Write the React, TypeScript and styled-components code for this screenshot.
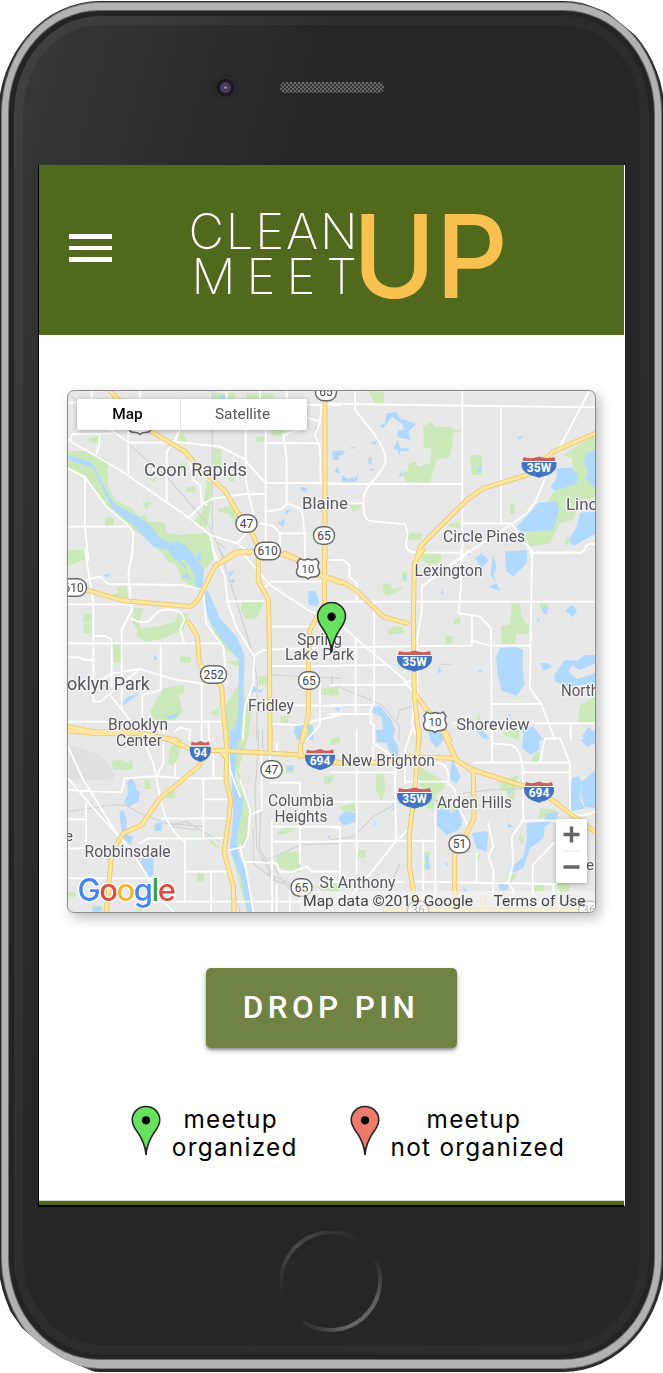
import React from "react";
import styled, { createGlobalStyle } from "styled-components";

const GlobalStyle = createGlobalStyle`
  * { box-sizing: border-box; }
  html, body { margin: 0; padding: 0; background: #fff; }
`;

const Phone = styled.div`
  width: 663px;
  height: 1373px;
  overflow: hidden;
  position: relative;
  display: flex;
  isolation: isolate;
  clip-path: polygon(0 0, 575px 0, 607px 12px, 645px 43px, 655px 62px, 663px 88px, 663px 1373px, 97px 1373px, 62px 1358px, 42px 1345px, 22px 1328px, 10px 1311px, 3px 1293px, 0 1283px);
`;

const Rim = styled.div<{ $inset: string; $radius: string; $bg: string }>`
  position: absolute;
  inset: ${(p) => p.$inset};
  border-radius: ${(p) => p.$radius};
  background: ${(p) => p.$bg};
  z-index: -1;
`;

const Face = styled.div`
  flex: 1;
  display: flex;
  flex-direction: column;
  padding: 0 38px;
`;

const Earpiece = styled.div`
  height: 165px;
  display: flex;
  align-items: center;
  padding: 9px 0 0 175px;
  gap: 42px;
`;

const Camera = styled.div`
  width: 25px;
  height: 25px;
  border-radius: 50%;
  background: radial-gradient(circle, #aaa0bd 0 0.5px, #3b3158 2px, #4f456e 4px, #171719 6.5px, #202022 9px, #2e2e2f 10px, #242424 12px);
`;

const Speaker = styled.div`
  width: 104px;
  height: 11px;
  border-radius: 5px;
  background: repeating-conic-gradient(#686868 0 25%, #333 0 50%) 0 0 / 4px 4px;
`;

const Screen = styled.main`
  width: 587px;
  height: 1042px;
  display: flex;
  flex-direction: column;
  align-items: center;
  background: #fff;
  border-left: 1px solid #000;
  border-right: 1px solid #fff;
  border-bottom: 2px solid #000;
`;

const Header = styled.header`
  width: 585px;
  height: 170px;
  flex: none;
  background: #50691c;
  display: flex;
  align-items: center;
  padding: 12px 0 0 30px;
`;

const MenuButton = styled.button`
  width: 43px;
  height: 28px;
  padding: 0;
  border: 0;
  background: none;
  display: flex;
  flex-direction: column;
  justify-content: space-between;
  margin-top: -16px;

  span { height: 4.6px; background: #fff; }
`;

const Logo = styled.svg`
  width: 330px;
  height: 110px;
  margin: 2px 0 0 73px;
  overflow: visible;
  font-family: Inter, sans-serif;
`;

const MapCard = styled.section`
  position: relative;
  width: 529px;
  height: 523px;
  flex: none;
  margin-top: 55px;
  border: 1px solid #8c8c8c;
  border-radius: 7px;
  overflow: hidden;
  background: #e8e8e8;
`;

const MapShadow = styled.div`
  height: 578px;
  filter: drop-shadow(4px 5px 6px rgba(0, 0, 0, 0.25));
`;

const MapArt = styled.svg`
  display: block;
  width: 527px;
  height: 521px;
  font-family: Roboto, sans-serif;
`;

const MapTypes = styled.div`
  position: absolute;
  left: 9px;
  top: 8px;
  width: 230px;
  height: 31px;
  display: grid;
  grid-template-columns: 103px 1fr;
  border-radius: 2px;
  background: #fff;
  box-shadow: 0 1px 5px rgba(0, 0, 0, 0.3);
`;

const MapType = styled.button<{ $active?: boolean }>`
  border: 0;
  border-left: 1px solid ${(p) => (p.$active ? "transparent" : "#e6e6e6")};
  padding: 0 3px 1px 0;
  background: none;
  font: ${(p) => (p.$active ? 500 : 400)} 15.4px Roboto, sans-serif;
  color: ${(p) => (p.$active ? "#000" : "#565656")};
`;

const Zoom = styled.div`
  position: absolute;
  right: 8px;
  bottom: 29px;
  width: 31px;
  height: 64px;
  background: #fff;
  border-radius: 2px;
  box-shadow: 0 1px 5px rgba(0, 0, 0, 0.3);
  svg { display: block; }
`;

const DropButton = styled.button`
  width: 251px;
  height: 80px;
  margin-top: 55px;
  flex: none;
  border: 0;
  border-radius: 5px;
  background: #6f8344;
  color: #fff;
  font: 500 31.5px Roboto, sans-serif;
  letter-spacing: 4.4px;
  padding: 0 1px 1px 0;
  box-shadow: 0 2px 3px rgba(0, 0, 0, 0.35), 0 3px 7px rgba(0, 0, 0, 0.15);
`;

const Legend = styled.div`
  display: flex;
  gap: 52px;
  margin: 57px 0 0 33px;
  height: 97px;
`;

const LegendItem = styled.div`
  display: flex;
  gap: 11px;
  font: 400 24.3px/28px Inter, sans-serif;
  letter-spacing: 1.28px;
  color: #000;
  text-align: center;
  white-space: pre;
  svg { flex: none; }
  p { margin: 0; }
`;

const FooterBar = styled.footer`
  width: 585px;
  height: 5px;
  margin-top: auto;
  flex: none;
  background: #50691c;
  border-top: 1px solid #d5dccb;
`;

const HomeArea = styled.div`
  flex: 1;
  display: flex;
  justify-content: center;
  padding: 24px 0 0 1px;
`;

type Tile = {
  x: number;
  y: number;
  park: string;
  water: string;
  rail: string;
  street: string;
  highway: string;
};

const TILES: Tile[] = [
  {
    x: 60, y: 380,
    park: "M24 213 75 212 143 240 143 312 166 360 215 385 235 408 255 405 265 425 315 428 318 458 360 465 450 458 465 540 330 540 250 470 180 420 130 365 80 290 24 262Z M365 152 382 187 345 185Z M460 205 485 210 483 260 456 250Z M560 40 640 40 640 55 560 57Z M455 40 525 38 525 58 455 58Z M635 135 675 135 675 170 635 168Z M82 178 120 165 118 187 100 190Z M440 300 455 310 452 380 440 445 400 430 430 390Z M475 385 505 380 510 365 535 395 525 430 505 400 478 397Z M380 322 407 320 405 338 382 335Z M247 370 272 367 260 390Z M137 413 162 413 160 438 137 438Z M34 512 75 510 78 540 30 540Z M590 170 615 168 612 185 590 183Z M508 290 525 290 522 305 508 305Z M270 295 290 295 285 310Z M360 250 380 250 378 275 360 270Z",
    water: "M24 225 95 248 116 285 160 370 235 410 270 435 295 470 325 488 350 483 375 495 412 540 345 540 325 510 280 500 220 435 155 385 100 265 24 240Z M488 42 502 58 478 58Z M818 213 840 213 840 225 828 240 818 235Z M830 262 840 280 822 276Z M722 320 743 325 738 336 725 332Z M677 392 700 388 675 405Z M653 428 675 418 670 442Z M766 133 770 145 764 157Z M412 520 425 517 420 540 408 540Z",
    rail: "M24 40 160 155 320 290 450 440 480 510 495 540 M457 33V445 M470 485 495 505",
    street: "M24 68H350 M95 33V68 M30 182 38 162 160 160 M24 180 180 270 385 412 450 465 530 490 600 540 M205 150V280 M24 440H210 M75 290V440L85 540 M24 265 75 292 140 380 210 440 220 460 215 540 M140 140 205 188H320 M118 160V195L110 220 M360 150 345 185 480 200 550 235 615 308 840 310 M320 365V218L360 150 M557 150V300L580 400 M465 353 430 370 385 415 M390 240 400 300 420 315 425 365 440 375 M465 355 555 342H615 M617 150V520 M615 188 780 190 M670 160 680 240V370Q668 395 615 393 M680 370 720 385Q735 400 735 540 M740 112 780 125 765 165 780 205 782 310 M740 74 840 75 M785 75 780 130 M600 430 640 438 660 460H740 M660 460V540 M500 33V60 M600 33V60 M240 33V60 M680 33V60 M560 440 555 465 530 490 M672 165 720 148 M450 465 465 540",
    highway: "M150 33 200 85 270 152 375 215 400 245 495 333 535 400 575 455 600 515 M795 33V540 M485 545 530 515H590L640 515 730 545",
  },
  {
    x: 330, y: 380,
    park: "M117 35H162V70L135 68 120 45Z M305 125 315 140 365 140 370 150 392 151 392 157 369 158 367 200 357 233 320 238 300 307 228 307 218 280 235 270 235 253 255 245 265 260 300 250 305 207 280 200 282 165 278 140Z M420 225H455V285H425Z M540 372H554V402H540Z M57 372 100 375 70 398Z M232 458H274V480H232Z M276 520 330 522 330 540 276 540Z M360 430 390 430 390 445 350 440Z M795 165 700 225 725 235 735 290 670 340 645 375 650 385 605 430 585 470 600 500 660 490 690 430 730 420 750 365 795 350Z M710 470 725 480 705 500Z",
    water: "M170 100 200 96 210 115 258 132 235 155 240 180 200 170 205 150 222 150 215 130 185 110 160 145 148 138 165 130Z M203 180 210 205 237 205 235 213 213 213 207 228 203 210 190 205Z M7 212 42 212 40 225 28 225 25 240 10 240Z M55 205 68 200 80 205Z M115 235 125 230 125 255 115 250Z M120 190 140 180 138 193Z M22 262 30 278 14 276Z M36 285 55 298 70 290 72 300 85 280 80 305 35 305Z M120 268 135 266 125 273Z M205 290 218 270 217 288Z M560 170 580 168 570 180Z M438 275 452 258 453 278Z M680 265 725 263 743 285 740 310 675 333 662 320 680 295Z M795 210 767 222 762 250 775 275 767 295 795 325Z M560 440 625 370 680 362 687 390 670 450 590 455 575 458Z M795 395 750 398 740 440 715 480 730 498 795 462Z M525 515 590 513 590 540 540 540Z M410 525 418 518 422 525Z M435 535 450 525 465 540Z",
    rail: "",
    street: "M0 71 240 75 800 82 M397 33V540 M75 33V90L120 145Q175 215 165 250C150 290 100 320 100 360Q98 415 120 423L225 433 233 460 228 495Q230 518 260 518H397 M513 82V430 M778 33 690 200 M648 290 615 368 590 400 545 432 440 500 385 540 M0 312H395 M397 430H545L580 485Q607 505 606 540 M605 518H755L775 492H800 M0 370H100",
    highway: "M800 158 670 215 630 250 590 285 460 325 410 360 270 500 258 545",
  },
  {
    x: 60, y: 550,
    park: "M305 0H460L463 28 435 55 420 122 365 90 350 45 325 35Z M24 0H75L70 30 24 48Z M170 112 200 108 205 145 130 135 175 128Z M222 175 252 175 240 205 240 235 290 230 345 215 355 185 385 190 370 240 310 265 260 275 230 260 232 240 218 220Z M70 192H96V220H70Z M70 222H96V250H70Z M160 283H183V338H160Z M360 318 393 320 393 338H362Z M545 155 612 155 590 205 555 207 543 180Z M430 125 445 200 475 280 540 330 500 335 535 350 550 310 480 220 440 130Z M310 415 370 405 375 425 355 435 368 485 345 510 285 515 270 485Z M540 395 520 430 495 470 505 570H560L575 490Z M450 490 480 470 475 500Z M597 377H625V405H597Z M662 497H685V518H662Z M780 415 835 410 835 435H785Z",
    water: "M330 0H390L420 40 430 55 430 120 445 125 480 205 530 260 553 315 550 480 540 570H515L535 490 537 330 478 260 445 205 430 140 395 90 362 80 385 65 340 20Z M348 15 375 45 385 75 400 100 410 90 390 50 360 5Z M508 65 525 63 510 82Z M505 92 525 85 522 100Z M745 123 765 122 778 155 772 168 745 165Z M130 78 147 70 145 82Z M280 315 292 325 285 333Z M578 405 590 415 588 425 565 430Z M595 420 612 418 600 430Z M312 495 330 498 355 485 350 500 330 508Z M703 525 735 512 760 530 760 570H710Z M825 475 840 472 835 485Z M180 462 205 440 240 430 190 465Z",
    rail: "M480 0 575 300 592 390 590 570 M640 375 840 385 M815 375V400",
    street: "M24 100 120 80 145 102 370 105 430 120 M24 163H220 M75 0 100 160V455 M150 435 210 510 M218 0 205 70 215 180 185 240V475 M213 205Q260 230 275 205T325 178Q370 180 373 210L360 238 372 275 M24 280H480 M103 258 135 258 155 268V410 M302 280V420L247 435V510 M24 322H60L75 330H100 M430 120 438 220 490 290 500 400 M102 455H120L240 357 350 390 430 400 M110 400 155 370 240 357 M460 0 495 80 502 155 530 235 582 318 580 400 555 470 548 570 M500 155 610 153 M540 0 630 105 740 178 840 225 M635 95H790 M635 230H760 M582 318 610 300 840 290 M635 348H840 M640 465 840 468 M640 522 710 525 840 495 M780 400V525L740 570 M24 515H480 M425 400V570 M445 515 447 570 M345 545 360 532 390 540 388 570 M605 120 635 95",
    highway: "M24 106 70 117 190 152 385 169Q408 170 430 118L465 48 530 10 600 4 M595 0V95L626 150 628 290 630 570 M675 10 730 35 760 68 840 98 M794 0V160L750 240 745 330V500L725 570 M385 215 412 258 418 340 455 380 485 410 490 480 498 570 M24 530 100 545 200 545 350 570",
  },
  {
    x: 330, y: 550,
    park: "M280 10 335 15 330 40 295 45 275 30Z M217 65 232 65 230 98 218 92Z M157 102 182 100 185 118 222 110 195 130 175 138 160 130Z M545 158 570 160 575 200 598 228 595 250 558 255 556 283 515 282 513 227 540 225Z M630 160 655 162 650 180 630 178Z M375 205 390 200 390 223 370 222Z M345 258 368 258 367 280 345 282Z M175 240 195 228 220 230 220 250 175 255Z M750 465 795 438 795 515 743 517Z M525 535 570 540 565 570 520 555Z M0 425H25V437H0Z M440 505 450 490 450 515Z",
    water: "M525 5 590 0 590 40 550 80 528 62Z M435 25 455 10 475 30 455 55Z M488 15 500 50 490 75 510 123 475 110 500 100 482 75Z M338 117 342 133 332 132Z M220 75 230 75 228 92 219 88Z M707 182 725 165 742 182 728 200Z M635 170 655 170 650 195 640 190Z M625 202 629 210 621 218Z M510 295 555 290 580 300 577 345 583 405 560 437 515 422 503 372 498 320Z M630 340 650 338 668 350 640 362Z M672 375 705 330 740 332 765 315 795 315 795 340 750 360 725 345 715 365 742 388 795 370 795 400 720 410 675 395Z M325 350 337 365 325 370Z M440 362 455 358 455 368Z M0 290 25 275 43 283 15 300Z M125 470 150 468 185 510 195 540 185 570 160 545 155 500 130 490Z M295 540 330 530 350 570H310Z M430 510 475 570 460 565 420 520Z M575 540 610 530 640 570H585Z M755 560 775 530 795 545V570Z M535 495 545 490 540 503Z",
    rail: "M0 400 75 430 155 465 210 530 205 570 M245 470 210 480 200 510 M332 342 365 345",
    street: "M0 155H800 M132 155V462L122 480V520L132 525V570 M0 30H40L58 45V80L80 100V150 M45 235 100 285 220 385 245 420 M393 0V110L385 190 450 200 483 235 485 465V570 M426 200V285 M0 292 425 287 M426 272 480 287H600 M606 0 600 415 635 465 675 570 M485 462H637 M370 520H800 M722 520V570 M0 405H220 M0 465H132 M0 347 170 345 M77 270V490 M420 0 275 110V185L262 260V440L235 410 222 400 245 390 265 395 M250 430V490L245 520 255 550 M0 492H120 M606 8H750L765 0 M235 0 250 8H275",
    highway: "M0 83 45 100 80 122 160 200 230 220 M278 0 253 40 250 200 253 440 268 570 M255 430 290 480 330 520 360 570",
  },
  {
    x: 60, y: 730,
    park: "M155 92 190 90 190 98 218 90 218 118 160 120Z M253 150H272L273 177H253Z M330 50 365 25 360 60 345 110 325 100Z M315 190 343 178 345 205 320 205Z M545 0H570L535 120 568 235 558 345 528 365 568 470 578 545 560 545 520 390 510 345 550 225 520 80Z M310 320H445L480 355 465 350 440 325H310Z M412 430H433V455H412Z M650 375 670 365H720V425L690 425 650 410Z M650 310 675 292 700 295 695 305 660 315Z M24 486H48V500H24Z M95 525 130 530 125 545H98Z M230 520H245V545H230Z M675 105 705 105 700 130 680 128Z M790 140 820 135 815 160 795 165Z M770 470 840 460V485H790Z M810 25 840 20V40Z M705 0H730L720 20Z",
    water: "M510 0H545L530 60 525 140 550 220 530 330 535 365 560 430 580 545H562L545 450 510 360 520 250 515 150 508 70Z M202 155 215 145 225 160 230 180 240 185 235 215 205 232 192 215 203 195Z M178 245 190 240 200 270 198 312 220 320 210 345 195 330 185 300Z M285 280 308 278 305 303 283 303Z M245 385 282 385 280 435 265 445 248 415Z M100 530 125 530 120 545 95 545Z M680 110 698 108 698 122H683Z M800 145 812 145 808 155Z M802 320 810 315 812 328Z M700 0H730V22L705 15Z",
    rail: "M595 0V60L585 180 590 350 640 450 720 475 M608 0V120L598 350 650 460 M580 300V400L630 440 M24 245 150 225 195 225 250 255 320 280 430 290 M330 285 380 275 480 335 M340 290 410 300 M600 400 720 345 840 340 M620 430 740 480 M640 410 700 495 M160 300 90 215 M520 470 540 545 M200 345 230 370 260 430",
    street: "M24 50 70 150 170 310 M24 145 110 245 205 350 270 450 M24 180 185 187 193 145 290 138 360 145H500 M250 30 280 100 300 200Q320 300 375 335V515 M24 268H78 M78 220V340 M24 355H80 M24 445H280 M430 150V330 M430 208H500 M305 265H495 M240 340 265 325H490 M375 425H500 M453 425V545 M260 515H840 M540 150 570 240 565 320 550 350 510 360 M540 345 550 395 650 400 660 425 700 425 740 410 755 425H840 M605 60V240L570 255 M630 60V100 M630 158H720V400 M635 290H840 M636 270V545 M640 335H840 M555 400 580 545 M690 480V545 M310 0V100L290 138 M505 60 510 120 540 200 M460 62V140 M345 100V140 M650 40V75 M650 465V545 M315 520 340 545",
    highway: "M24 2 100 10 250 10 330 30 400 60 500 62 720 75 840 98 M430 85 415 110 300 205 245 285 190 310 155 365 148 450 138 550 M498 0 500 90 498 150 512 210 505 280 492 365 520 470 522 550 M480 60 500 85 M630 0V65 M740 0 722 45V80",
  },
  {
    x: 330, y: 730,
    park: "M0 30 20 25 27 40 0 45Z M138 135 160 130 167 175 155 213 138 180Z M28 230 75 218 75 245 45 248Z M270 110 300 130 330 145 345 170 315 200 310 240 285 230 280 180 265 160Z M318 210 345 210 370 235 380 245 355 240 320 242Z M510 155 565 135 550 210 535 212 535 185 512 180Z M610 75 630 65 630 92 603 95Z M630 235 675 238 685 255 625 265Z M85 360H108V383H85Z M280 365 300 365 295 395 302 410 290 423 275 410Z M570 305 583 330 575 343 567 330Z M440 365 450 375 445 395 435 395Z M535 435 560 430 555 445 540 460Z M610 460 640 457 642 485H612Z M680 455 720 460 715 485 690 490Z M655 535 685 520 680 545H655Z",
    water: "M138 0H175L205 50 205 90 180 70 170 40 140 35Z M295 0 350 0 340 30 320 55 300 30Z M455 0 485 30 465 20Z M582 5 610 0 630 15 627 60 600 75 575 50Z M755 30 795 0V40L770 52Z M365 85 392 140 380 160 360 150Z M25 265 45 245 78 250 75 275 40 288Z M322 240H360L360 250 385 235 397 280 385 300 350 315 320 285Z M425 310 465 303 475 310 470 365 440 355Z M725 145 745 138 755 155 750 210 765 235 720 245Z M755 155 795 122V235L765 230 755 200Z M590 280 640 275 650 250 685 245 680 265 645 290 640 325 600 355 580 415 550 428 540 415 580 380 590 330Z M533 280 552 290 535 293Z M280 370 295 380 300 420 278 410 292 400Z M347 393 355 405 347 408Z M505 460 535 465 533 480 510 482Z M135 275 142 285 132 285Z M185 235 192 230V243Z M538 175 545 185 530 195Z M640 510 660 520 645 535Z M400 468 415 490 400 485Z",
    rail: "M0 330 70 320 130 260 200 220 330 210 M210 400 180 470 M400 190 480 180 600 175",
    street: "M80 0V430 M0 127H200 M0 215H200 M0 333H312 M0 290 30 295V450 M195 120 198 330 M235 300 200 330 130 420 60 500 30 545 M225 160V60L245 0 M265 90 330 100Q360 110 355 155H230 M316 240V545 M350 155 375 180 380 220 415 290 M430 98H720 M486 0V98 M486 40 545 45Q575 60 578 120L580 270 545 320 550 400 535 460 550 480V545 M630 95 645 25H690L720 100V240Q740 270 795 245 M580 127H715 M575 272H680 M475 280 490 350 475 380 490 420V500 M250 455 680 462 M608 540V405L670 340 760 330 M130 0V40L200 85 M130 50 V85 M0 455H220 M280 330V545 M440 370V460 M670 462V545 M520 515 660 515",
    highway: "M0 98 150 98 240 80 370 85 430 120 560 162 625 180 680 220 800 310 M268 0 262 90 252 200 238 310 238 410 262 550 M340 5 360 50 380 90 430 125 432 265 400 330 374 375V550 M165 540H800 M460 500V540",
  },
];

type LayerName = "park" | "water" | "rail" | "street" | "highway";

function Layer({ name, fill = "none", stroke, width }: { name: LayerName; fill?: string; stroke?: string; width?: number }) {
  return (
    <g fill={fill} stroke={stroke} strokeWidth={width} strokeLinejoin="round" strokeLinecap="round">
      {TILES.map((t) => (
        <path key={`${t.x}-${t.y}`} d={t[name]} transform={`translate(${t.x} ${t.y}) scale(.33333)`} />
      ))}
    </g>
  );
}

const TOWNS: [string, number, number, number, number][] = [
  ["Coon Rapids", 144, 476.5, 103, 17.8],
  ["Blaine", 302, 509.5, 46, 16.2],
  ["Circle Pines", 443, 542.2, 82, 16],
  ["Lino", 566, 510.5, 32, 16],
  ["Lexington", 414.5, 576.2, 68, 16],
  ["Spring", 297, 645.2, 45, 16],
  ["Lake Park", 285, 660.5, 69, 16],
  ["oklyn Park", 67, 690.2, 83, 17.8],
  ["Fridley", 248, 711.2, 46, 16],
  ["North", 561, 696.5, 38, 16],
  ["Shoreview", 456.5, 730.2, 73, 16],
  ["Brooklyn", 108, 730.5, 60, 16],
  ["Center", 116, 746.5, 46, 16],
  ["New Brighton", 341, 766.7, 94, 16],
  ["Columbia", 268, 806.2, 66, 16],
  ["Heights", 274.5, 822, 53, 16],
  ["Arden Hills", 437, 808.2, 75, 16],
  ["Robbinsdale", 84.5, 857.2, 86, 16],
  ["St Anthony", 319.5, 888.7, 76, 16],
  ["e", 65, 841, 8, 15],
  ["e", 586, 870, 8, 15],
];

const ROUTES: [string, number, number, number][] = [
  ["47", 246.5, 523.5, 21],
  ["65", 324, 535.5, 21],
  ["65", 326, 392, 21],
  ["610", 267.5, 551, 26],
  ["610", 73.5, 587.5, 26],
  ["252", 213.5, 674.5, 26],
  ["65", 309, 680.5, 21],
  ["47", 271.5, 769.5, 21],
  ["51", 459.5, 844, 21],
  ["65", 301.5, 887.5, 21],
  ["36", 418, 910, 21],
  ["36", 589, 910, 21],
];

function RouteSign({ label, x, y, w }: { label: string; x: number; y: number; w: number }) {
  return (
    <g transform={`translate(${x} ${y})`}>
      <rect x={-w / 2} y={-8.7} width={w} height={17.4} rx={8.5} fill="#fff" stroke="#686868" strokeWidth={1.4} />
      <text y={4.3} textAnchor="middle" fontSize={12} fill="#444">{label}</text>
    </g>
  );
}

function UsSign({ label, x, y }: { label?: string; x: number; y: number }) {
  return (
    <g transform={`translate(${x} ${y})`}>
      <path
        d="M-8-10Q-5-7.5 0-9.5Q5-7.5 8-10L11-6Q8.5-2 11.5 2Q12 8.5 5 8.5Q2 8.2 0 10.5Q-2 8.2-5 8.5Q-12 8.5-11.5 2Q-8.5-2-11-6Z"
        fill="#fff" stroke="#686868" strokeWidth={1.5} strokeLinejoin="round"
      />
      {label && <text y={4.2} textAnchor="middle" fontSize={11.5} fill="#444">{label}</text>}
    </g>
  );
}

function InterstateSign({ label, x, y, w }: { label: string; x: number; y: number; w: number }) {
  const h = w / 2;
  return (
    <g transform={`translate(${x} ${y})`}>
      <path d={`M${-h + 1}-6L${-h + 2}-10Q${-h / 2}-7.5 0-10.5Q${h / 2}-7.5 ${h - 2}-10L${h - 1}-6Z`} fill="#c9605a" />
      <path d={`M${-h}-5H${h}Q${h + 1} 5 ${h * 0.45} 8.5Q${h * 0.2} 9.5 0 10.8Q${-h * 0.2} 9.5 ${-h * 0.45} 8.5Q${-h - 1} 5 ${-h}-5Z`} fill="#4275c0" />
      <path d={`M${-h}-5.5H${h}`} stroke="#fff" strokeWidth={1} />
      <text y={5.2} textAnchor="middle" fontSize={12} fontWeight={700} fill="#fff">{label}</text>
    </g>
  );
}

function PinShape({ color }: { color: string }) {
  return (
    <>
      <path
        d="M15 49C14.3 41 12 35 7.5 28C4 23 1.2 20 1.2 14.5A13.8 13.6 0 0 1 28.8 14.5C28.8 20 26 23 22.5 28C18 35 15.7 41 15 49Z"
        fill={color} stroke="#222" strokeWidth={1.5} strokeLinejoin="round"
      />
      <path d="M15 42V49" stroke="#222" strokeWidth={1.8} />
      <circle cx={15} cy={14.8} r={4.1} fill="#000" />
    </>
  );
}

const GOOGLE: [string, string][] = [
  ["G", "#4285f4"], ["o", "#dc4c3f"], ["o", "#f2b632"], ["g", "#4285f4"], ["l", "#3ba35a"], ["e", "#dc4c3f"],
];

function MapDrawing() {
  return (
    <MapArt viewBox="68 391 527 521">
      <path d="M70 745 100 755 113 770 114 781 68 779Z" fill="#e0e0e0" />
      <Layer name="park" fill="#cbe9b9" />
      <Layer name="water" fill="#b0d9ff" />
      <Layer name="rail" stroke="#cfd1d4" width={3.5} />
      <Layer name="street" stroke="#fff" width={5.4} />
      <Layer name="highway" stroke="#edc971" width={15} />
      <Layer name="highway" stroke="#fce6a0" width={9.5} />
      {ROUTES.map(([label, x, y, w], i) => (
        <RouteSign key={i} label={label} x={x} y={y} w={w} />
      ))}
      <UsSign label="10" x={308} y={568.5} />
      <UsSign label="10" x={435} y={722} />
      <UsSign x={140} y={424} />
      <InterstateSign label="35W" x={539} y={467} w={35} />
      <InterstateSign label="35W" x={414.5} y={661} w={35} />
      <InterstateSign label="35W" x={414.5} y={798} w={35} />
      <InterstateSign label="94" x={200.3} y={751.5} w={21} />
      <InterstateSign label="694" x={320} y={759.5} w={30} />
      <InterstateSign label="694" x={539} y={792} w={30} />
      <g fill="#57575c" stroke="#f5f5f5" strokeWidth={2.6} strokeLinejoin="round" paintOrder="stroke" transform="translate(0 -.5)">
        {TOWNS.map(([name, x, y, w, size], i) => (
          <text key={i} x={x} y={y} textLength={w} lengthAdjust="spacingAndGlyphs" fontSize={size}>{name}</text>
        ))}
      </g>
      <g transform="translate(316.4 601.5) scale(1.01 1.03)">
        <PinShape color="#68e15f" />
      </g>
      <rect x={300} y={891} width={295} height={21} fill="#f5f5f5" opacity={0.65} />
      <g fontSize={15.4} fill="#444">
        <text x={303} y={906} textLength={170} lengthAdjust="spacingAndGlyphs">Map data ©2019 Google</text>
        <text x={493.5} y={906} textLength={92} lengthAdjust="spacingAndGlyphs">Terms of Use</text>
      </g>
      <text
        x={77.5} y={901} fontSize={31} fontWeight={500} fontFamily="Inter, sans-serif"
        textLength={98.5} lengthAdjust="spacing" stroke="#fff" strokeWidth={2.5} strokeLinejoin="round" paintOrder="stroke"
      >
        {GOOGLE.map(([ch, color], i) => (
          <tspan key={i} fill={color}>{ch}</tspan>
        ))}
      </text>
    </MapArt>
  );
}

function LegendPin({ color }: { color: string }) {
  return (
    <svg width={30} height={51} viewBox="0 0 30 51">
      <g transform="translate(0 .5)"><PinShape color={color} /></g>
    </svg>
  );
}

export default function App() {
  return (
    <Phone>
      <GlobalStyle />
      <Rim $inset="1px -2px 1px -2px" $radius="102px / 116px" $bg="#2b2b2b" />
      <Rim $inset="2px 1px 4px 1px" $radius="98px / 112px" $bg="#777" />
      <Rim $inset="3px 2px 5px 2px" $radius="97px / 111px" $bg="#b2b2b2" />
      <Rim $inset="10px 8px 13px 8px" $radius="91px / 103px" $bg="#686868" />
      <Rim $inset="11px 9px 14px 9px" $radius="90px / 102px" $bg="#242424" />
      <Rim $inset="16px 14px 19px 14px" $radius="86px / 98px" $bg="linear-gradient(105deg, #414141 0, #2d2d2d 35%, #2c2c2c)" />
      <Rim $inset="25px 23px 28px 23px" $radius="77px / 89px" $bg="linear-gradient(105deg, #373737 0, #303030 14%, #262626 31%)" />
      <Face>
        <Earpiece>
          <Camera />
          <Speaker />
        </Earpiece>
        <Screen>
          <Header>
            <MenuButton aria-label="Menu"><span /><span /><span /></MenuButton>
            <Logo viewBox="185 202 330 110">
              <g fill="#fff" fontWeight={250} fontSize={49}>
                <text x={188.5} y={249} textLength={169} lengthAdjust="spacing">CLEAN</text>
                <text x={191.5} y={294} textLength={165.5} lengthAdjust="spacing">MEET</text>
              </g>
              <text x={352.5} y={298} fill="#f8c150" fontWeight={530} fontSize={115} textLength={155.5} lengthAdjust="spacingAndGlyphs">UP</text>
            </Logo>
          </Header>
          <MapShadow>
            <MapCard>
              <MapDrawing />
              <MapTypes>
                <MapType $active>Map</MapType>
                <MapType>Satellite</MapType>
              </MapTypes>
              <Zoom>
                <svg width={31} height={64}>
                  <path d="M7.5 15.5H23.5M15.5 7.5V23.5M7.5 48H23.5" stroke="#666" strokeWidth={3.4} />
                  <path d="M7 32H24" stroke="#e6e6e6" />
                </svg>
              </Zoom>
            </MapCard>
          </MapShadow>
          <DropButton>DROP PIN</DropButton>
          <Legend>
            <LegendItem>
              <LegendPin color="#68e15f" />
              <p>{"meetup \norganized"}</p>
            </LegendItem>
            <LegendItem>
              <LegendPin color="#ec7b6c" />
              <p>{"meetup \nnot organized"}</p>
            </LegendItem>
          </Legend>
          <FooterBar />
        </Screen>
        <HomeArea>
          <svg width={104} height={106} viewBox="0 0 104 106" fill="none" strokeWidth={4}>
            <defs>
              <linearGradient id="ringTop" x1="0" y1="1" x2="1" y2="0">
                <stop offset="0" stopColor="#262626" />
                <stop offset=".5" stopColor="#4b4b4b" />
                <stop offset="1" stopColor="#262626" />
              </linearGradient>
              <linearGradient id="ringBottom" x1="0" y1="1" x2="1" y2="0">
                <stop offset="0" stopColor="#262626" />
                <stop offset=".3" stopColor="#666" />
                <stop offset=".7" stopColor="#606060" />
                <stop offset="1" stopColor="#262626" />
              </linearGradient>
            </defs>
            <path d="M3 65A50 50 0 0 1 78 9" stroke="url(#ringTop)" />
            <path d="M96 29A50 50 0 0 1 23 91" stroke="url(#ringBottom)" />
          </svg>
        </HomeArea>
      </Face>
    </Phone>
  );
}
